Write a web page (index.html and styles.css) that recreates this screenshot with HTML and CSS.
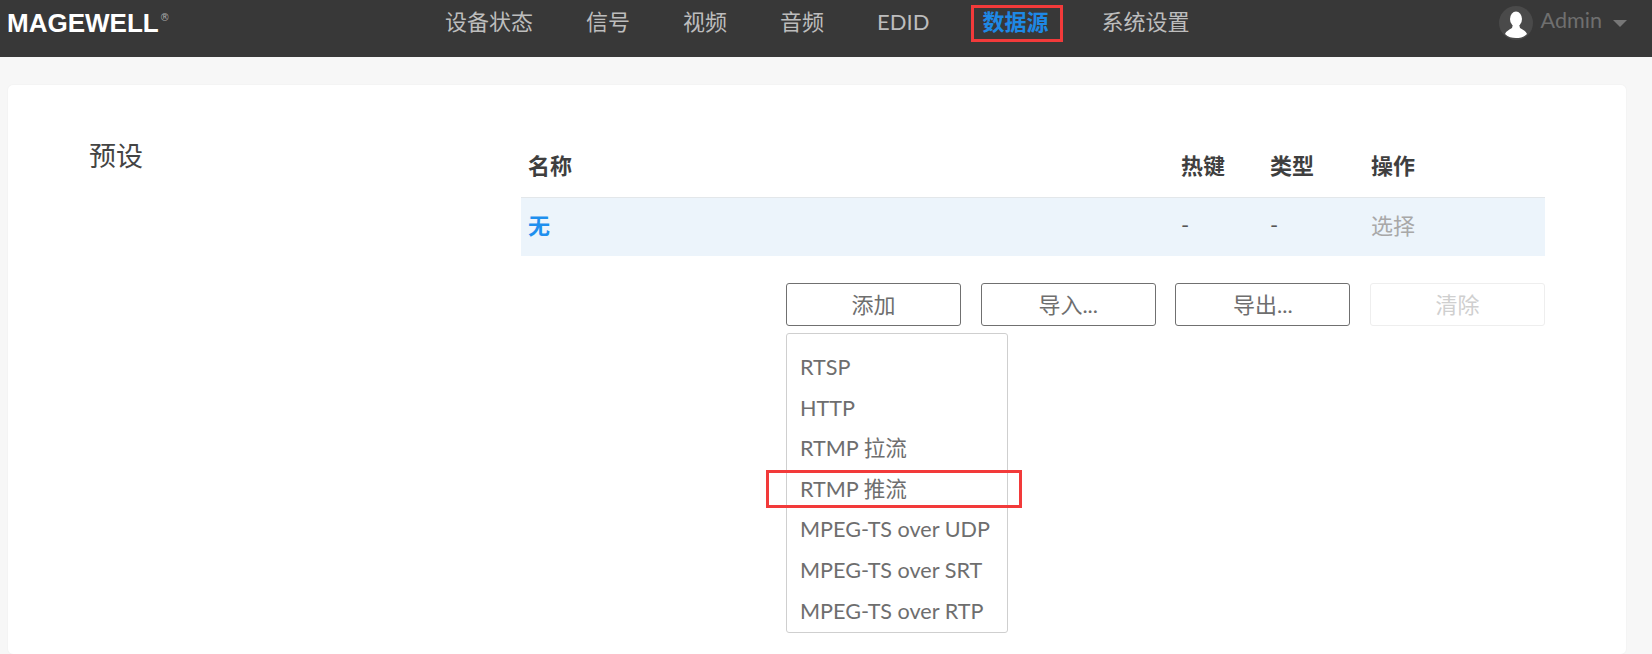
FILE: index.html
```html
<!DOCTYPE html>
<html lang="zh">
<head>
<meta charset="utf-8">
<title>数据源</title>
<link rel="stylesheet" href="styles.css">
</head>
<body>
<header class="topbar">
  <div class="brand">
    <span class="logo-word">MAGEWELL</span>
    <span class="logo-reg">®</span>
  </div>
  <nav class="nav">
    <a class="nav-item">设备状态</a>
    <a class="nav-item">信号</a>
    <a class="nav-item">视频</a>
    <a class="nav-item">音频</a>
    <a class="nav-item">EDID</a>
    <a class="nav-item nav-active">数据源</a>
    <a class="nav-item">系统设置</a>
  </nav>
  <div class="user">
    <svg class="avatar" width="34" height="34" viewBox="0 0 34 34" aria-hidden="true">
      <circle cx="17" cy="17" r="17" fill="#4a4a4a"/>
      <ellipse cx="17" cy="13" rx="6" ry="7.5" fill="#fff"/>
      <path d="M14 18 L20 18 L21 22 C24 24 27 25 28 28 C25 31 21 32 17 32 C13 32 9 31 6 28 C7 25 10 24 13 22 Z" fill="#fff"/>
    </svg>
    <span class="user-name">Admin</span>
    <span class="caret"></span>
  </div>
</header>
<main class="page">
  <section class="card">
    <h2 class="section-title">预设</h2>
    <div class="content">
      <div class="table">
        <div class="row row-head">
          <div class="cell">名称</div>
          <div class="cell">热键</div>
          <div class="cell">类型</div>
          <div class="cell">操作</div>
        </div>
        <div class="row row-current">
          <div class="cell cell-name">无</div>
          <div class="cell">-</div>
          <div class="cell">-</div>
          <div class="cell cell-action">选择</div>
        </div>
      </div>
      <div class="actions">
        <div class="add-wrap">
          <button class="btn">添加</button>
          <ul class="menu">
            <li class="menu-item">RTSP</li>
            <li class="menu-item">HTTP</li>
            <li class="menu-item">RTMP 拉流</li>
            <li class="menu-item menu-marked">RTMP 推流</li>
            <li class="menu-item">MPEG-TS over UDP</li>
            <li class="menu-item">MPEG-TS over SRT</li>
            <li class="menu-item">MPEG-TS over RTP</li>
          </ul>
        </div>
        <button class="btn">导入...</button>
        <button class="btn">导出...</button>
        <button class="btn btn-disabled">清除</button>
      </div>
    </div>
  </section>
</main>
</body>
</html>
```

FILE: styles.css
```css
*, *::after { box-sizing: border-box; }
html, body { margin: 0; height: 654px; overflow: hidden; }
body {
  background: #f7f7f7;
  font-family: Lato, "Noto Sans CJK SC", sans-serif;
  font-size: 22px;
  color: #6e6e6e;
}
.topbar {
  height: 57px;
  background: #383838;
  display: flex;
  align-items: flex-start;
  padding-left: 7px;
}
.brand {
  flex: none;
  display: flex;
  align-items: flex-start;
  width: 438px;
  padding-top: 8px;
}
.logo-word {
  font-family: "Liberation Sans", sans-serif;
  font-weight: 700;
  font-size: 26px;
  line-height: 30px;
  color: #fff;
}
.logo-reg {
  font-family: "DejaVu Sans", sans-serif;
  font-size: 10px;
  line-height: 12px;
  margin: 4px 0 0 1px;
  color: #aaa;
}
.nav {
  display: flex;
  gap: 53px;
  padding-top: 6px;
  line-height: 32px;
}
.nav-item { color: #bdbdbd; position: relative; white-space: nowrap; }
.nav-active { color: #1e88e5; font-weight: 700; }
.nav-active::after {
  content: "";
  position: absolute;
  left: -11px;
  right: -15px;
  top: -1px;
  height: 37px;
  border: 3px solid #f23a3a;
}
.user {
  display: flex;
  align-items: center;
  margin-left: auto;
  padding: 6px 25px 0 0;
  color: #6f6f6f;
  font-size: 21.6px;
}
.avatar { margin-right: 8px; }
.user-name { margin-right: 11px; position: relative; top: -3px; }
.caret {
  width: 0;
  height: 0;
  border-left: 7px solid transparent;
  border-right: 7px solid transparent;
  border-top: 7px solid #777;
}
.page { padding: 28px 26px 0 8px; }
.card {
  display: flex;
  background: #fff;
  border-radius: 5px;
  box-shadow: 0 0 2px rgba(0, 0, 0, .05);
  height: 569px;
  padding: 52px 81px 0 81px;
}
.section-title {
  flex: none;
  width: 432px;
  margin: 0;
  font-size: 27px;
  font-weight: 400;
  line-height: 38px;
  color: #444;
}
.content { flex: 1; }
.row {
  display: grid;
  grid-template-columns: 653px 89px 101px 1fr;
  align-items: center;
}
.cell { padding-left: 7px; }
.row-head {
  height: 61px;
  border-bottom: 1px solid #e3e7ea;
  font-weight: 700;
  color: #3f3f3f;
  padding-bottom: 7px;
}
.row-current { height: 58px; background: #ecf4fb; color: #555; padding-bottom: 6px; }
.cell-name { color: #1e8fee; font-weight: 700; }
.cell-action { color: #a8a8a8; }
.actions {
  display: grid;
  grid-template-columns: 1fr 1fr 1fr 1fr;
  column-gap: 19.5px;
  margin: 27px 0 0 265px;
}
.add-wrap { position: relative; }
.btn {
  display: block;
  width: 100%;
  height: 43px;
  padding: 0 0 3px;
  background: #fff;
  border: 1px solid #707070;
  border-radius: 3px;
  font: inherit;
  color: #6e6e6e;
}
.btn-disabled { border-color: #eeeeee; color: #cfcfcf; }
.menu {
  position: absolute;
  left: 0;
  top: 50px;
  width: 222px;
  height: 300px;
  margin: 0;
  padding: 13px 0 0 13px;
  list-style: none;
  background: #fff;
  border: 1px solid #cfcfcf;
  border-radius: 3px;
  font-size: 21.6px;
}
.menu-item {
  height: 40.6px;
  line-height: 40.6px;
  white-space: nowrap;
}
.menu-marked { position: relative; }
.menu-marked::after {
  content: "";
  position: absolute;
  left: -34px;
  top: 1px;
  width: 256px;
  height: 38px;
  border: 3px solid #f23a3a;
}
```
